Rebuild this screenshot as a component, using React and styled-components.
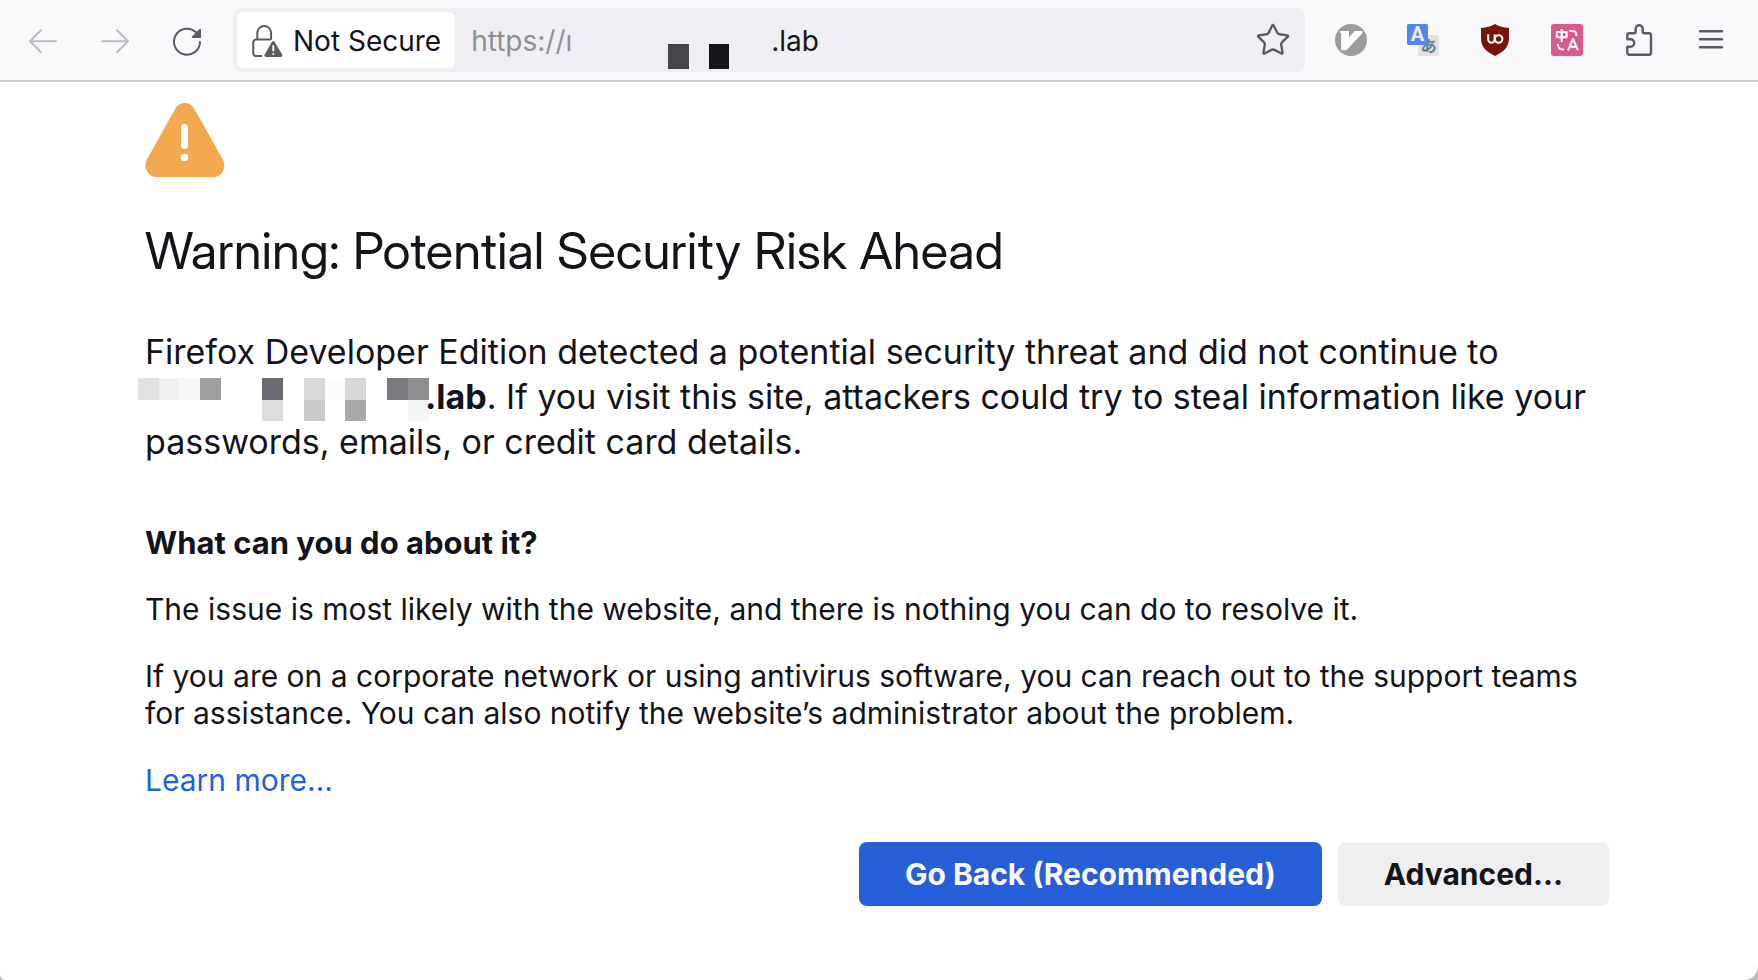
import React from "react";
import styled, { createGlobalStyle } from "styled-components";
import { Star } from "lucide-react";

const GlobalStyle = createGlobalStyle`
  *, *::before, *::after { box-sizing: border-box; }
  body {
    margin: 0;
    background: #bdbdbd;
    color: #15141a;
    font-family: Inter, "Liberation Sans", sans-serif;
  }
`;

const Window = styled.div`
  display: flex;
  flex-direction: column;
  min-height: 100vh;
  background: #fff;
  border-radius: 0 0 14px 6px;
`;

const Toolbar = styled.nav`
  display: flex;
  align-items: center;
  gap: 10px;
  padding: 8px 11px 8px 7px;
  background: #f9f9fb;
  border-bottom: 2px solid #ccc;
`;

const ButtonGroup = styled.div`
  display: flex;
`;

const ToolButton = styled.button`
  display: flex;
  align-items: center;
  justify-content: center;
  width: 72px;
  height: 64px;
  padding: 0;
  border: 0;
  background: none;
  color: #5b5b66;

  &:disabled { color: #bcbcc1; }
`;

const AddressBar = styled.div`
  display: flex;
  align-items: center;
  flex: 1;
  min-width: 0;
  height: 64px;
  padding: 4px;
  border-radius: 8px;
  background: #f0f0f4;
  font-size: 28px;
`;

const IdentityButton = styled.button`
  display: flex;
  align-items: center;
  gap: 10px;
  height: 56px;
  padding: 2px 14px 0;
  border: 0;
  border-radius: 6px;
  background: #fff;
  color: #15141a;
  font: inherit;
  white-space: nowrap;
`;

const UrlField = styled.label`
  display: flex;
  align-items: center;
  flex: 1;
  min-width: 0;
  height: 56px;
  padding: 2px 0 0 16px;
`;

const Scheme = styled.span`
  width: 99px;
  color: #8f8f96;
  white-space: nowrap;
`;

const UrlInput = styled.input`
  flex: 1;
  min-width: 0;
  padding: 0;
  border: 0;
  outline: 0;
  background: none;
  color: #15141a;
  font: inherit;
`;

const StarButton = styled(ToolButton)`
  width: 56px;
  height: 56px;
`;

const Content = styled.main`
  display: flex;
  flex-direction: column;
  align-items: flex-start;
  padding: 21px 149px 74px 145px;
`;

const Title = styled.h1`
  margin: 43px 0 0;
  font-family: "Inter Display", Roboto, sans-serif;
  font-size: 51px;
  font-weight: 400;
  line-height: 62px;
`;

const Lead = styled.p`
  margin: 47px 0 0;
  font-size: 34px;
  line-height: 45px;
`;

const Subtitle = styled.h2`
  margin: 60px 0 0;
  font-size: 31px;
  font-weight: 700;
  line-height: 37px;
`;

const Text = styled.p`
  margin: 30px 0 0;
  font-size: 30px;
  line-height: 37px;
`;

const Link = styled.a`
  color: #2760db;
  text-decoration: none;
`;

const Actions = styled.div`
  display: flex;
  align-self: stretch;
  justify-content: flex-end;
  gap: 16px;
  margin-top: 43px;
`;

const ActionButton = styled.button`
  height: 64px;
  padding: 0 46px;
  border: 0;
  border-radius: 8px;
  background: ${(p) => (p.$primary ? "#275fd9" : "#efeff1")};
  color: ${(p) => (p.$primary ? "#fbfbfe" : "#15141a")};
  font: 700 30px/37px Inter, "Liberation Sans", sans-serif;
  white-space: nowrap;
`;

const InlineMosaic = styled.svg`
  margin: 0 -4px -12px -7px;
`;

const Icon = ({ children, ...rest }) => (
  <svg
    width="32"
    height="32"
    viewBox="0 0 32 32"
    overflow="visible"
    fill="none"
    stroke="currentColor"
    strokeWidth="2"
    strokeLinecap="round"
    strokeLinejoin="round"
    aria-hidden="true"
    {...rest}
  >
    {children}
  </svg>
);

const BackIcon = () => (
  <Icon><path d="M29 17.3H3M14 6.3 3 17.3l11 11" /></Icon>
);

const ForwardIcon = () => (
  <Icon><path d="M3 17.3h26M18 6.3l11 11-11 11" /></Icon>
);

const ReloadIcon = () => (
  <Icon>
    <path d="M29 18A13 13 0 1 1 25 8.3" />
    <path d="M28.6 5 21 12.6q-1 1.4.8 1.4H30V5.4q-.2-1.3-1.4-.4z" fill="currentColor" stroke="none" />
  </Icon>
);

const LockWarningIcon = () => (
  <Icon stroke="#5b5b60">
    <path d="M6.3 14V8a6.9 6.9 0 0 1 13.8 0v6" />
    <path d="M10.5 31H5a2.8 2.8 0 0 1-2.8-2.8V17.4A2.8 2.8 0 0 1 5 14.6h14" />
    <path d="M20.8 17.2q1.5-2.2 3 0l7.3 12.4q.8 2.4-1.6 2.4H15.2q-2.4 0-1.6-2.4z" fill="#5b5b60" stroke="none" />
    <path d="M22.3 21v4.5M22.3 29v.1" stroke="#fff" />
  </Icon>
);

const VimIcon = () => (
  <Icon stroke="none">
    <circle cx="16" cy="16" r="16" fill="#9c9c9c" />
    <path d="M5 7h9v6.2L19.6 7h8v2L11.4 26.2H6.2V9.2L5 8.4z" fill="#fff" />
  </Icon>
);

const TranslateIcon = () => (
  <Icon stroke="none" fontWeight="700" textAnchor="middle">
    <rect x="11" y="11" width="21" height="21" rx="1.5" fill="#e3e3e4" />
    <text x="22" y="28" fontSize="16" fontFamily='"Noto Sans CJK JP", sans-serif' fill="#607d8b" transform="rotate(8 22 22)">あ</text>
    <rect width="21" height="21" rx="1.5" fill="#5486ed" />
    <text x="10.5" y="17" fontSize="20" fontFamily='Roboto, sans-serif' fill="#eef0f5">A</text>
  </Icon>
);

const ShieldIcon = () => (
  <Icon>
    <path d="M16 0q5.500 3.600 14 4v10c0 9-5 13.500-14 18C7 27.500 2 23 2 14V4q8.500-.4 14-4z" fill="#7a130e" stroke="none" />
    <path d="M9.200 10.200v5.300a3.200 3.200 0 0 0 6.400 0v-5.300" stroke="#fff" strokeLinecap="butt" />
    <circle cx="19.600" cy="15" r="3.800" stroke="#fff" />
  </Icon>
);

const DictionaryIcon = () => (
  <Icon stroke="#fff" strokeLinecap="butt">
    <rect width="32" height="32" rx="3" fill="#da5a89" stroke="none" />
    <path d="M5.800 8h9.800v5.300H5.800zM10.700 5v13M18.500 7h3q4 0 4 5M7 20v1q0 4.500 6 4.500M17 26.300l5-11.300 5 11.300M18.500 22.700h7" />
  </Icon>
);

const ExtensionsIcon = () => (
  <Icon strokeWidth="2.400">
    <path d="M4.300 15.300v-4a2 2 0 0 1 2-2h5.200q1.200 0 1.200-1.200V4.700a3.500 3.500 0 0 1 7 0v3.400q0 1.200 1.200 1.200H26a2 2 0 0 1 2 2v17.400a2 2 0 0 1-2 2H6.300a2 2 0 0 1-2-2v-6h3.200a3.700 3.700 0 0 0 0-7.400z" />
  </Icon>
);

const MenuIcon = () => (
  <Icon strokeWidth="2.400"><path d="M5 7.300h22M5 15.300h22M5 23.300h22" /></Icon>
);

const WarningIcon = () => (
  <svg width="80" height="74" viewBox="0 0 80 74" role="img" aria-label="Warning">
    <path d="M30.500 5.200C34.500-1.700 45-1.700 49 5.200L78 56.700C81.800 64 77 74 69 74H11C2.500 74-2 64 1.800 56.700z" fill="#f2a950" />
    <rect x="36" y="21" width="7" height="25" rx="3.500" fill="#fff" />
    <rect x="36" y="51" width="7" height="7" rx="2" fill="#fff" />
  </svg>
);

const UrlMosaic = () => (
  <svg width="201" height="56" viewBox="0 0 201 56" aria-hidden="true">
    <rect x="98" y="31" width="21" height="25" fill="#46454a" />
    <rect x="139" y="31" width="20" height="25" fill="#15141a" />
  </svg>
);

// Each cell: left edge, width, row, colour.
const mosaicCells = [
  [0, 21, 0, "#e2e2e2"],
  [21, 20, 0, "#efefef"],
  [41, 21, 0, "#f6f6f6"],
  [62, 21, 0, "#9f9fa1"],
  [124, 21, 0, "#6b6a70"],
  [166, 21, 0, "#d9d9d9"],
  [187, 20, 0, "#fcfcfc"],
  [207, 21, 0, "#d8d8da"],
  [249, 21, 0, "#7b7a80"],
  [270, 21, 0, "#8e8e91"],
  [124, 21, 1, "#dcdcdc"],
  [166, 21, 1, "#cacacb"],
  [207, 21, 1, "#a9a9ab"],
  [270, 21, 1, "#f5f5f5"],
];

const HostMosaic = () => (
  <InlineMosaic width="291" height="43" viewBox="0 0 291 43" aria-hidden="true">
    {mosaicCells.map(([x, w, row, fill]) => (
      <rect key={`${x}-${row}`} x={x} y={row * 22} width={w} height={row ? 21 : 22} fill={fill} />
    ))}
  </InlineMosaic>
);

const extensions = [
  ["Vimium", VimIcon],
  ["Translate page", TranslateIcon],
  ["uBlock Origin", ShieldIcon],
  ["Dictionary", DictionaryIcon],
  ["Extensions", ExtensionsIcon],
  ["Open application menu", MenuIcon],
];

export default function App() {
  return (
    <Window>
      <GlobalStyle />
      <Toolbar aria-label="Navigation">
        <ButtonGroup>
          <ToolButton disabled aria-label="Back"><BackIcon /></ToolButton>
          <ToolButton disabled aria-label="Forward"><ForwardIcon /></ToolButton>
          <ToolButton aria-label="Reload"><ReloadIcon /></ToolButton>
        </ButtonGroup>
        <AddressBar>
          <IdentityButton><LockWarningIcon />Not Secure</IdentityButton>
          <UrlField>
            <Scheme>https://ı</Scheme>
            <UrlMosaic />
            <UrlInput aria-label="Address" defaultValue=".lab" />
          </UrlField>
          <StarButton aria-label="Bookmark this page">
            <Star size={36} strokeWidth={1.6} aria-hidden="true" />
          </StarButton>
        </AddressBar>
        <ButtonGroup>
          {extensions.map(([label, Glyph]) => (
            <ToolButton key={label} aria-label={label}><Glyph /></ToolButton>
          ))}
        </ButtonGroup>
      </Toolbar>
      <Content>
        <WarningIcon />
        <Title>Warning: Potential Security Risk Ahead</Title>
        <Lead>
          Firefox Developer Edition detected a potential security threat and did not continue to{" "}
          <HostMosaic /><b>.lab</b>. If you visit this site, attackers could try to steal information
          like your passwords, emails, or credit card details.
        </Lead>
        <Subtitle>What can you do about it?</Subtitle>
        <Text>The issue is most likely with the website, and there is nothing you can do to resolve it.</Text>
        <Text>
          If you are on a corporate network or using antivirus software, you can reach out to the
          support teams for assistance. You can also notify the website’s administrator about the problem.
        </Text>
        <Text><Link href="#learn-more">Learn more…</Link></Text>
        <Actions>
          <ActionButton $primary>Go Back (Recommended)</ActionButton>
          <ActionButton>Advanced…</ActionButton>
        </Actions>
      </Content>
    </Window>
  );
}
